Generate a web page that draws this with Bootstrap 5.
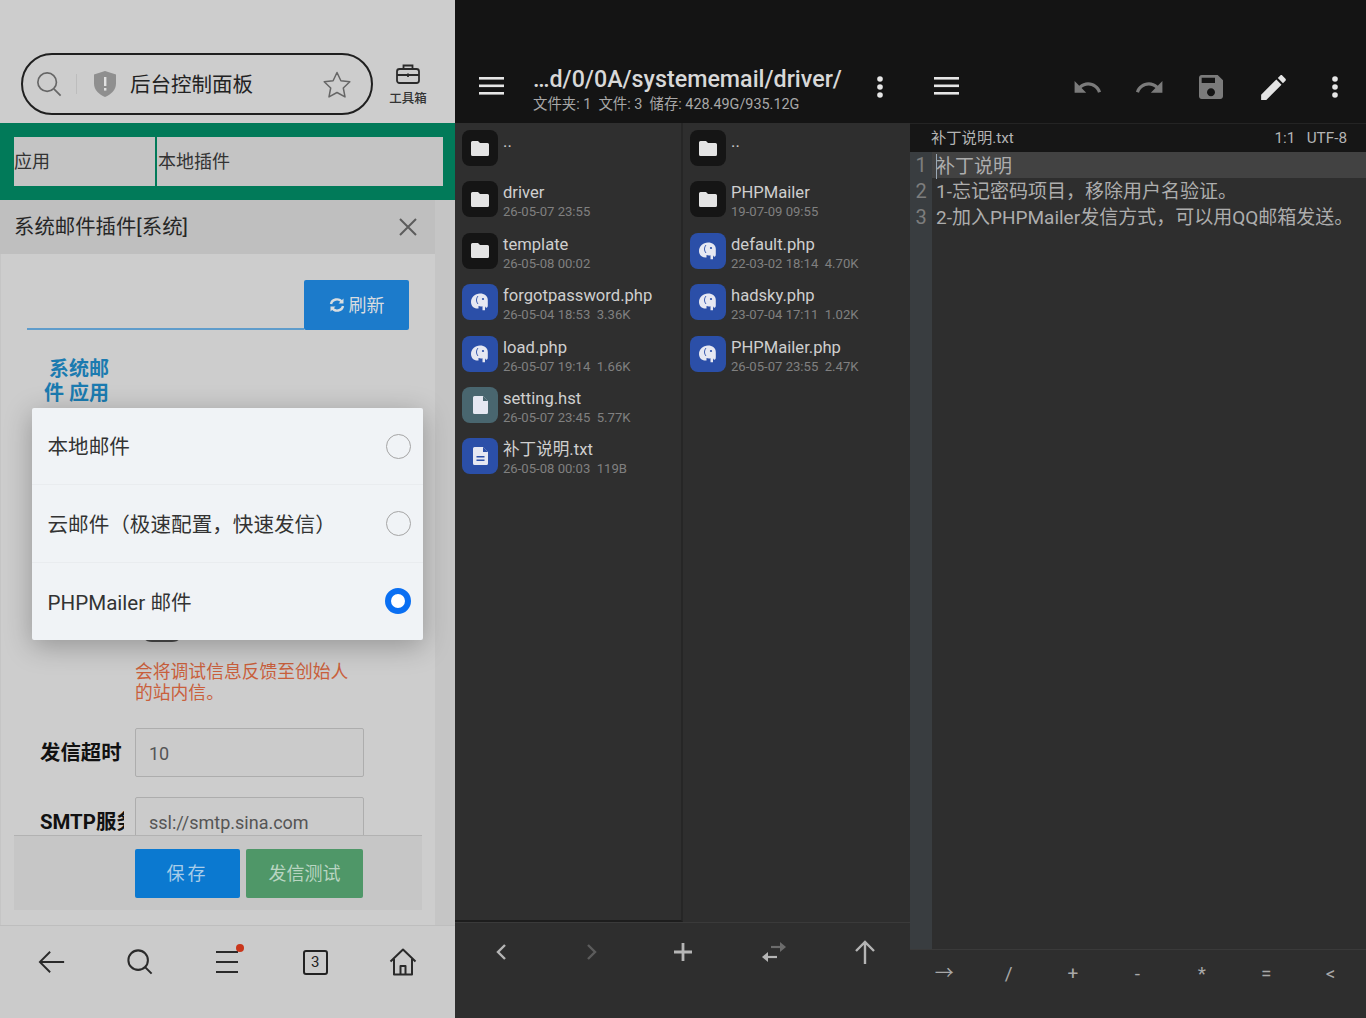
<!DOCTYPE html>
<html lang="zh-CN">
<head>
  <meta charset="UTF-8" />
  <title>后台控制面板</title>
  <link href="https://cdn.jsdelivr.net/npm/bootstrap@5.3.2/dist/css/bootstrap.min.css" rel="stylesheet" />
  <style>
    html, body { margin: 0; height: 1018px; overflow: hidden; background: #2e2e2e; }
    body { font-family: Roboto, "Noto Sans CJK SC", sans-serif; }
    .shot { width: 1366px; height: 1018px; }
    .pane-web { width: 455px; background: #cdcdcd; position: relative; color: #1d1d1d; flex: none; }
    .pane-files { width: 455px; background: #2e2e2e; flex: none; }
    .pane-edit { width: 456px; background: #2e2e2e; flex: none; }

    /* browser */
    .url-area { height: 123px; padding: 53px 0 0 21px; }
    .url-pill { width: 352px; height: 62px; border: 2px solid #1f1f1f; border-radius: 31px; padding: 0 20px 0 13px; }
    .url-sep { width: 1px; height: 20px; background: #bdbdbd; margin: 0 16px 0 14px; }
    .url-title { font-size: 20.5px; margin-left: 13px; color: #222; padding-top: 2px; }
    .toolbox { width: 42px; margin-left: 14px; font-size: 12.5px; font-weight: 500; color: #333; line-height: 14px; padding-top: 11px; }
    .toolbox-txt { margin-top: 8px; }
    .green-bar { height: 77px; background: #017a59; padding: 14px 12px 14px 14px; gap: 2px; }
    .tab-cell { background: #c4c4c4; font-size: 18px; color: #333; height: 49px; line-height: 50px; }
    .tab-a { width: 141px; }
    .tab-b { flex: 1; padding-left: 1px; }
    .web-mid { background: #c5c5c5; height: 725px; }
    .sub-head { height: 54px; width: 435px; background: #bfbfbf; padding: 0 17px 0 14px; font-size: 20.4px; color: #262626; }
    .panel-body { width: 434px; height: 671px; background: #cdcdcd; margin-left: 1px; position: relative; overflow: hidden; }
    .refresh-row { padding: 26px 0 0 26px; width: 408px; height: 76px; }
    .refresh-line { flex: 1; border-bottom: 2px solid #5f9ccb; }
    .refresh-btn { width: 105px; height: 50px; background: #1c7bcb; color: #d9dde0; font-size: 18px; border-radius: 2px; }
    .mail-label { width: 70px; margin: 27px 0 0 38px; text-align: right; color: #1b7bb0; font-weight: 700; font-size: 20px; line-height: 24px; }
    .form-area { position: absolute; left: 0; right: 0; top: 378px; }
    .toggle-stub { width: 44px; height: 20px; background: #4a4a4a; border-radius: 0 0 12px 12px; margin: -10px 0 0 139px; }
    .warn-txt { color: #c9603c; font-size: 17.8px; line-height: 21px; margin: 19px 0 0 134px; width: 225px; }
    .field-row { height: 49px; }
    .field-one { margin-top: 25px; }
    .field-two { margin-top: 20px; }
    .field-name { width: 84px; margin-right: 11px; margin-left: 39px; padding-top: 2px; font-weight: 700; font-size: 20.4px; color: #111; white-space: nowrap; overflow: hidden; flex: none; }
    .field-box { width: 229px; height: 49px; border: 1px solid #adadad; border-radius: 2px; background: #cbcbcb; color: #555; font-size: 18px; padding: 2px 13px 0; }
    .foot-bar { position: absolute; left: 13px; top: 581px; width: 408px; height: 75px; background: #c6c6c6; border-top: 1px solid #b2b2b2; padding: 13px 0 0 121px; gap: 6px; }
    .foot-btn { height: 49px; border-radius: 2px; font-size: 18px; color: #a9cde9; }
    .foot-save { width: 105px; background: #0b79d0; letter-spacing: 3px; }
    .foot-test { width: 117px; background: #4f9768; color: #b9d5c2; }
    .web-nav { position: absolute; left: 0; right: 0; top: 925px; height: 93px; border-top: 1px solid #bebebe; background: #cbcbcb; padding: 0 8px 20px; }
    .web-slot { flex: 1; }
    .nav-slot { position: relative; height: 24px; }
    .nav-dot { position: absolute; width: 8px; height: 8px; background: #c9361b; border-radius: 50%; top: -6px; right: -5px; }
    .tabs-count { width: 25px; height: 25px; border: 2px solid #222; border-radius: 3px; font-size: 15px; line-height: 21px; text-align: center; color: #222; }

    /* selector sheet */
    .picker { position: absolute; left: 32px; top: 408px; width: 391px; height: 232px; background: #f0f3f6; box-shadow: 0 6px 28px rgba(0,0,0,.28); border-radius: 2px; }
    .picker-row { height: 77.4px; padding: 0 12px 0 15.500px; font-size: 20.6px; color: #333; border-bottom: 1px solid #e9ecef; }
    .picker-row:last-child { border-bottom: 0; }
    .picker-row > span:first-child { padding-top: 3px; }
    .radio-off { width: 25px; height: 25px; border: 1.5px solid #a5a5a5; border-radius: 50%; }
    .radio-on { width: 26px; height: 26px; border: 6px solid #0a6ff2; border-radius: 50%; background: #fff; }

    /* dark top bars */
    .top-bar { height: 123px; background: #141414; padding-top: 64px; color: #ddd; }
    .top-burger { padding: 13px 0 0 24px; }
    .top-path { margin-left: 29px; }
    .top-more { padding: 12px 26px 0 0; }
    .path-main { font-size: 23.25px; line-height: 30px; font-weight: 500; color: #d8d8d8; white-space: nowrap; }
    .path-sub { font-size: 14.4px; line-height: 20px; padding-top: 1px; color: #a8a8a8; white-space: pre; }
    .file-cols { height: 799px; }
    .file-col { width: 227px; flex: none; padding: 0 0 0 7px; }
    .file-col-a { background: #2f2f2f; border-right: 2px solid #262626; border-bottom: 2px solid #1d1d1d; width: 228px; }
    .file-row { height: 51.4px; gap: 5px; padding-top: 7px; }
    .file-icon { width: 36px; height: 36px; border-radius: 8px; background: #151515; flex: none; }
    .ic-php { background: #2b4fa8; }
    .ic-hst { background: #49666f; }
    .file-name { font-size: 16.6px; line-height: 21px; color: #cfcfcf; margin-top: 1px; white-space: nowrap; }
    .file-meta { font-size: 13.1px; line-height: 17px; color: #808080; white-space: pre; }
    .file-bar { height: 96px; border-top: 1px solid #3a3a3a; color: #b5b5b5; padding-bottom: 38px; }
    .bar-slot { flex: 1; }

    /* editor */
    .ed-top { height: 123px; background: #141414; padding-top: 64px; }
    .ed-burger { padding: 13px 0 0 24px; }
    .ed-tool { width: 62px; height: 46px; }
    .ed-status { height: 29px; background: #161616; padding: 0 19px 0 21px; color: #b4b4b4; font-size: 15.3px; border-top: 1px solid #242424; }
    .ed-body { height: 797px; position: relative; }
    .gutter { width: 22px; background: #393d40; color: #7d7d7d; font-size: 20px; text-align: center; flex: none; }
    .gutter div, .code-line { height: 25.8px; line-height: 23.7px; padding-top: 2px; }
    .code-area { flex: 1; color: #adadad; font-size: 19px; white-space: nowrap; overflow: hidden; position: relative; }
    .code-line { padding-left: 4px; }
    .code-line.cur { background: #424242; }
    .caret-bar { display: inline-block; width: 1px; height: 25px; background: #9aa7b5; margin-right: -1px; vertical-align: -6px; }
    .ed-keys { height: 69px; border-top: 1px solid #3a3a3a; color: #a8a8a8; font-size: 19px; padding: 0 0 20px 2px; }
    .ed-keys span { width: 64.4px; text-align: center; }
  </style>
</head>
<body>
  <div class="shot d-flex">

    <!-- browser -->
    <section class="pane-web">
      <div class="url-area d-flex align-items-start">
        <div class="url-pill d-flex align-items-center">
          <svg width="26" height="26" viewBox="0 0 28 28" fill="none" stroke="#666" stroke-width="1.8"><circle cx="12" cy="12" r="10"/><path d="M19.5 19.5l7 7"/></svg>
          <span class="url-sep"></span>
          <svg width="24" height="28" viewBox="0 0 24 28"><path d="M12 1l11 3.500v9c0 6.500-5 10.800-11 13.500C6 24.300 1 20 1 13.500v-9z" fill="#8f8f8f"/><rect x="11" y="7" width="2.400" height="9" fill="#e2e2e2"/><rect x="11" y="18" width="2.400" height="2.600" fill="#e2e2e2"/></svg>
          <span class="url-title">后台控制面板</span>
          <svg class="ms-auto" width="28" height="27" viewBox="0 0 28 27" fill="none" stroke="#666" stroke-width="1.5"><path d="M14 1.500l3.900 8.200 8.900 1.100-6.500 6.200 1.700 8.900L14 21.500l-8 4.400 1.700-8.900-6.500-6.200 8.900-1.100z" stroke-linejoin="round"/></svg>
        </div>
        <div class="toolbox text-center">
          <svg class="d-block mx-auto" width="24" height="20" viewBox="0 0 24 20" fill="none" stroke="#2a2a2a" stroke-width="1.8"><rect x="1" y="5" width="22" height="14" rx="2.500"/><path d="M7.500 5V1.500h9V5M1 11h22M12 9.500v3.500"/></svg>
          <div class="toolbox-txt text-nowrap">工具箱</div>
        </div>
      </div>
      <div class="green-bar d-flex">
        <div class="tab-cell tab-a">应用</div>
        <div class="tab-cell tab-b">本地插件</div>
      </div>
      <div class="web-mid">
        <div class="sub-head d-flex align-items-center justify-content-between">
          <span>系统邮件插件[系统]</span>
          <svg width="20" height="20" viewBox="0 0 20 20" stroke="#5c5c5c" stroke-width="2"><path d="M2 2l16 16M18 2L2 18"/></svg>
        </div>
        <div class="panel-body">
          <div class="refresh-row d-flex">
            <div class="refresh-line"></div>
            <div class="refresh-btn d-flex align-items-center justify-content-center gap-1">
              <svg width="16" height="16" viewBox="0 0 16 16" fill="none" stroke="#d9dde0" stroke-width="2.400"><path d="M2 7a6 5.500 0 0 1 11-2M14 9a6 5.500 0 0 1-11 2"/><path d="M14.500 1.500v5h-5zM1.500 14.500v-5h5z" fill="#d9dde0" stroke="none"/></svg>
              <span>刷新</span>
            </div>
          </div>
          <div class="mail-label">系统邮件 应用</div>
          <div class="form-area">
            <div class="toggle-stub"></div>
            <div class="warn-txt">会将调试信息反馈至创始人的站内信。</div>
            <div class="field-row field-one d-flex align-items-center">
              <div class="field-name">发信超时</div>
              <div class="field-box d-flex align-items-center">10</div>
            </div>
            <div class="field-row field-two d-flex align-items-center">
              <div class="field-name">SMTP服务器</div>
              <div class="field-box d-flex align-items-center">ssl://smtp.sina.com</div>
            </div>
          </div>
          <div class="foot-bar d-flex align-items-start">
            <div class="foot-btn foot-save d-flex align-items-center justify-content-center">保存</div>
            <div class="foot-btn foot-test d-flex align-items-center justify-content-center">发信测试</div>
          </div>
        </div>
      </div>

      <div class="web-nav d-flex align-items-center">
        <div class="web-slot d-flex justify-content-center">
          <svg width="28" height="26" viewBox="0 0 30 26" fill="none" stroke="#2a2a2a" stroke-width="2"><path d="M28 13H2M13 2L2 13l11 11"/></svg>
        </div>
        <div class="web-slot d-flex justify-content-center">
          <svg width="26" height="26" viewBox="0 0 28 28" fill="none" stroke="#2a2a2a" stroke-width="2.200"><circle cx="12" cy="12" r="10.500"/><path d="M19.500 19.500l7 7"/></svg>
        </div>
        <div class="web-slot d-flex justify-content-center">
          <div class="nav-slot">
            <svg class="d-block" width="24" height="24" viewBox="0 0 24 24" stroke="#2a2a2a" stroke-width="2"><path d="M1 2h22M1 12h22M1 22h22"/></svg>
            <span class="nav-dot"></span>
          </div>
        </div>
        <div class="web-slot d-flex justify-content-center"><div class="tabs-count">3</div></div>
        <div class="web-slot d-flex justify-content-center">
          <svg width="28" height="28" viewBox="0 0 28 28" fill="none" stroke="#2a2a2a" stroke-width="2" stroke-linejoin="round"><path d="M1.500 13.500L14 1.500l12.500 12M5 11v15.500h18V11M11.500 26.500V18h5v8.500"/></svg>
        </div>
      </div>

      <div class="picker">
        <div class="picker-row d-flex align-items-center justify-content-between"><span>本地邮件</span><span class="radio-off"></span></div>
        <div class="picker-row d-flex align-items-center justify-content-between"><span>云邮件（极速配置，快速发信）</span><span class="radio-off"></span></div>
        <div class="picker-row d-flex align-items-center justify-content-between"><span>PHPMailer 邮件</span><span class="radio-on"></span></div>
      </div>
    </section>

    <!-- file manager -->
    <section class="pane-files">
      <div class="top-bar d-flex">
        <div class="top-burger">
          <svg class="d-block" width="25" height="18" viewBox="0 0 25 18" fill="#e6e6e6"><rect width="25" height="2.600" y="0"/><rect width="25" height="2.600" y="7.500"/><rect width="25" height="2.600" y="15"/></svg>
        </div>
        <div class="top-path">
          <div class="path-main">…d/0/0A/systememail/driver/</div>
          <div class="path-sub">文件夹: 1  文件: 3  储存: 428.49G/935.12G</div>
        </div>
        <div class="ms-auto top-more">
          <svg class="d-block" width="8" height="22" viewBox="0 0 8 22" fill="#e6e6e6"><circle cx="4" cy="3" r="2.800"/><circle cx="4" cy="11" r="2.800"/><circle cx="4" cy="19" r="2.800"/></svg>
        </div>
      </div>
      <div class="file-cols d-flex">
        <div class="file-col file-col-a" id="colA"></div>
        <div class="file-col" id="colB"></div>
      </div>
      <div class="file-bar d-flex align-items-center">
        <div class="bar-slot d-flex justify-content-center"><svg width="12" height="18" viewBox="0 0 12 18" fill="none" stroke="#b5b5b5" stroke-width="2.400"><path d="M10 2L3 9l7 7"/></svg></div>
        <div class="bar-slot d-flex justify-content-center"><svg width="12" height="18" viewBox="0 0 12 18" fill="none" stroke="#5c5c5c" stroke-width="2.400"><path d="M2 2l7 7-7 7"/></svg></div>
        <div class="bar-slot d-flex justify-content-center"><svg width="20" height="20" viewBox="0 0 20 20" stroke="#b5b5b5" stroke-width="2.800"><path d="M10 1v18M1 10h18"/></svg></div>
        <div class="bar-slot d-flex justify-content-center"><svg width="26" height="22" viewBox="0 0 26 22" fill="none" stroke-width="2.200"><path d="M10 6h12" stroke="#6c6c6c"/><path d="M19 1l6 5-6 5z" fill="#6c6c6c"/><path d="M4 16h12" stroke="#b5b5b5"/><path d="M7 11l-6 5 6 5z" fill="#b5b5b5"/></svg></div>
        <div class="bar-slot d-flex justify-content-center"><svg width="22" height="24" viewBox="0 0 22 24" fill="none" stroke="#b5b5b5" stroke-width="2.400"><path d="M11 24V2M2 11l9-9 9 9"/></svg></div>
      </div>
    </section>

    <!-- editor -->
    <section class="pane-edit">
      <div class="ed-top d-flex">
        <div class="ed-burger">
          <svg class="d-block" width="25" height="18" viewBox="0 0 25 18" fill="#e6e6e6"><rect width="25" height="2.600" y="0"/><rect width="25" height="2.600" y="7.500"/><rect width="25" height="2.600" y="15"/></svg>
        </div>
        <div class="ms-auto d-flex">
          <div class="ed-tool d-flex align-items-center justify-content-center"><svg width="31" height="31" viewBox="0 0 24 24" fill="#7b7b7b"><path d="M12.500 8c-2.650 0-5.050.99-6.900 2.600L2 7v9h9l-3.620-3.620c1.390-1.160 3.160-1.880 5.120-1.880 3.540 0 6.550 2.310 7.600 5.500l2.370-.78C21.080 11.030 17.150 8 12.500 8z"/></svg></div>
          <div class="ed-tool d-flex align-items-center justify-content-center"><svg width="31" height="31" viewBox="0 0 24 24" fill="#7b7b7b"><path transform="matrix(-1 0 0 1 24 0)" d="M12.500 8c-2.650 0-5.050.99-6.900 2.600L2 7v9h9l-3.620-3.620c1.390-1.160 3.160-1.880 5.120-1.880 3.540 0 6.550 2.310 7.600 5.500l2.370-.78C21.080 11.030 17.150 8 12.500 8z"/></svg></div>
          <div class="ed-tool d-flex align-items-center justify-content-center"><svg width="32" height="32" viewBox="0 0 24 24" fill="#7b7b7b"><path d="M17 3H5c-1.110 0-2 .9-2 2v14c0 1.100.89 2 2 2h14c1.100 0 2-.9 2-2V7l-4-4zm-5 16c-1.660 0-3-1.340-3-3s1.340-3 3-3 3 1.340 3 3-1.340 3-3 3zm3-10H5V5h10v4z"/></svg></div>
          <div class="ed-tool d-flex align-items-center justify-content-center"><svg width="33" height="33" viewBox="0 0 24 24" fill="#e4e4e4"><path d="M3 17.250V21h3.750L17.810 9.940l-3.750-3.750L3 17.250zM20.710 7.040c.39-.39.39-1.020 0-1.410l-2.340-2.340c-.39-.39-1.020-.39-1.410 0l-1.830 1.830 3.750 3.750 1.830-1.830z"/></svg></div>
          <div class="ed-tool d-flex align-items-center justify-content-center"><svg width="8" height="22" viewBox="0 0 8 22" fill="#e6e6e6"><circle cx="4" cy="3" r="2.800"/><circle cx="4" cy="11" r="2.800"/><circle cx="4" cy="19" r="2.800"/></svg></div>
        </div>
      </div>
      <div class="ed-status d-flex align-items-center justify-content-between">
        <span>补丁说明.txt</span>
        <span>1:1&nbsp;&nbsp;&nbsp;UTF-8</span>
      </div>
      <div class="ed-body d-flex">
        <div class="gutter"><div>1</div><div>2</div><div>3</div></div>
        <div class="code-area">
          <div class="code-line cur"><span class="caret-bar"></span>补丁说明</div>
          <div class="code-line">1-忘记密码项目，移除用户名验证。</div>
          <div class="code-line">2-加入PHPMailer发信方式，可以用QQ邮箱发送。</div>
        </div>
      </div>
      <div class="ed-keys d-flex align-items-center">
        <span>→</span><span>/</span><span>+</span><span>-</span><span>*</span><span>=</span><span>&lt;</span>
      </div>
    </section>
  </div>

  <script>
    const folder = '<svg width="18" height="15" viewBox="0 0 18 15" fill="#e4e4e4"><path d="M1.500 0h5.500l2 2h7.500A1.500 1.500 0 0 1 18 3.500v10a1.500 1.500 0 0 1-1.500 1.500h-15A1.500 1.500 0 0 1 0 13.500v-12A1.500 1.500 0 0 1 1.500 0z"/></svg>';
    const php = '<svg width="20" height="20" viewBox="0 0 20 20" fill="#e6e8f2"><path d="M10 1.500C5 1.500 1 5.500 1 10c0 4 3 7 7.500 6.500V14c1.500.5 3 .5 4 .2v4h2.500V14c.3 1.500 1 2 2 1.500.8-.5.8-1.500.8-2.500V8c0-4-3.300-6.500-7.800-6.500z"/><path d="M8 4c-2 2.500-2 5.500 0 8" fill="none" stroke="#2b4fa8" stroke-width=".9"/><circle cx="13" cy="7" r="1.100" fill="#2b4fa8"/></svg>';
    const hst = '<svg width="15" height="18" viewBox="0 0 15 18" fill="#e6e8f2"><path d="M1.500 0H10l5 5v11.500a1.500 1.500 0 0 1-1.500 1.500h-12A1.500 1.500 0 0 1 0 16.500v-15A1.500 1.500 0 0 1 1.500 0z"/><path d="M10 0v5h5z" fill="#49666f"/></svg>';
    const txt = '<svg width="15" height="18" viewBox="0 0 15 18"><path fill="#e6e8f2" d="M1.500 0H10l5 5v11.500a1.500 1.500 0 0 1-1.500 1.500h-12A1.500 1.500 0 0 1 0 16.500v-15A1.500 1.500 0 0 1 1.500 0z"/><path fill="#2b4fa8" d="M10 0v5h5zM3.500 9h8v1.600h-8zM3.500 12.500h8v1.600h-8z"/></svg>';
    const colA = [
      ["f", "..", ""],
      ["f", "driver", "26-05-07 23:55"],
      ["f", "template", "26-05-08 00:02"],
      ["p", "forgotpassword.php", "26-05-04 18:53  3.36K"],
      ["p", "load.php", "26-05-07 19:14  1.66K"],
      ["h", "setting.hst", "26-05-07 23:45  5.77K"],
      ["t", "补丁说明.txt", "26-05-08 00:03  119B"]
    ];
    const colB = [
      ["f", "..", ""],
      ["f", "PHPMailer", "19-07-09 09:55"],
      ["p", "default.php", "22-03-02 18:14  4.70K"],
      ["p", "hadsky.php", "23-07-04 17:11  1.02K"],
      ["p", "PHPMailer.php", "26-05-07 23:55  2.47K"]
    ];
    function fill(id, rows) {
      const box = document.getElementById(id);
      rows.forEach(([kind, name, meta]) => {
        const cls = { f: "", p: "ic-php", h: "ic-hst", t: "ic-php" }[kind];
        const ic = { f: folder, p: php, h: hst, t: txt }[kind];
        box.insertAdjacentHTML("beforeend",
          `<div class="file-row d-flex align-items-start">
             <div class="file-icon ${cls} d-flex align-items-center justify-content-center">${ic}</div>
             <div><div class="file-name">${name}</div><div class="file-meta">${meta}</div></div>
           </div>`);
      });
    }
    fill("colA", colA);
    fill("colB", colB);
  </script>
  <script src="https://cdn.jsdelivr.net/npm/bootstrap@5.3.2/dist/js/bootstrap.bundle.min.js"></script>
</body>
</html>
